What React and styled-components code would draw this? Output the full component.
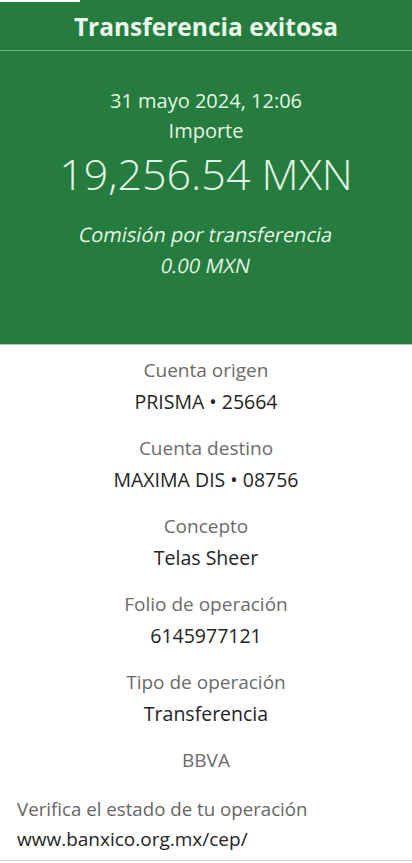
import React from "react";
import styled, { createGlobalStyle } from "styled-components";

const Global = createGlobalStyle`
  html, body { margin: 0; padding: 0; background: #ffffff; }
  body { font-family: "Open Sans", Roboto, sans-serif; -webkit-font-smoothing: antialiased; }
`;

const Page = styled.div`
  width: 412px;
  min-height: 863px;
  display: flex;
  flex-direction: column;
  background: #ffffff;
`;

const Header = styled.section`
  position: relative;
  background: #267c3e;
  color: #e6f6e6;
  display: flex;
  flex-direction: column;
  align-items: center;
  height: 345px;
  box-sizing: border-box;
  border-bottom: 1px solid #a9cfae;
`;

const TopTab = styled.div`
  position: absolute;
  left: 0;
  top: 0;
  width: 80px;
  height: 2px;
  background: #ffffff;
`;

const Title = styled.h1`
  margin: 0;
  width: 100%;
  box-sizing: border-box;
  height: 51px;
  padding-top: 11px;
  text-align: center;
  font-size: 24.5px;
  font-weight: 700;
  line-height: 32px;
  color: #eaf8ea;
  border-bottom: 1px solid #6fae7e;
`;

const Summary = styled.div`
  display: flex;
  flex-direction: column;
  align-items: center;
  padding-top: 35px;
`;

const Line = styled.div`
  font-size: ${(p) => p.$size || 20}px;
  font-weight: ${(p) => p.$weight || 400};
  line-height: ${(p) => p.$lh || 30}px;
  margin-top: ${(p) => p.$mt || 0}px;
  color: #e3f5e3;
  white-space: nowrap;
`;

const Slanted = styled(Line)`
  display: inline-block;
  transform: skewX(-11deg);
`;

const Details = styled.section`
  display: flex;
  flex-direction: column;
  align-items: center;
  padding-top: 10px;
`;

const Field = styled.div`
  display: flex;
  flex-direction: column;
  align-items: center;
  margin-bottom: 16px;
`;

const Label = styled.div`
  font-size: 19px;
  line-height: 31px;
  color: #6b6b6b;
  font-weight: 400;
`;

const Value = styled.div`
  font-size: 19.5px;
  line-height: 31px;
  color: #242424;
`;

const Footer = styled.div`
  padding: 1px 17px 5px;
  display: flex;
  flex-direction: column;
  border-bottom: 1px solid #cfcfcf;
`;

const FootLine = styled.div`
  font-size: ${(p) => (p.$muted ? 18.7 : 19)}px;
  line-height: 31px;
  color: ${(p) => (p.$muted ? "#666666" : "#242424")};
`;

const fields = [
  ["Cuenta origen", "PRISMA • 25664"],
  ["Cuenta destino", "MAXIMA DIS • 08756"],
  ["Concepto", "Telas Sheer"],
  ["Folio de operación", "6145977121"],
  ["Tipo de operación", "Transferencia"],
];

export default function App() {
  return (
    <Page>
      <Global />
      <Header>
        <TopTab />
        <Title>Transferencia exitosa</Title>
        <Summary>
          <Line>31 mayo 2024, 12:06</Line>
          <Line>Importe</Line>
          <Line $size={43} $weight={300} $lh={56}>19,256.54 MXN</Line>
          <Slanted $mt={18}>Comisión por transferencia</Slanted>
          <Slanted $lh={32}>0.00 MXN</Slanted>
        </Summary>
      </Header>
      <Details>
        {fields.map(([l, v]) => (
          <Field key={l}>
            <Label>{l}</Label>
            <Value>{v}</Value>
          </Field>
        ))}
        <Field>
          <Label>BBVA</Label>
        </Field>
      </Details>
      <Footer>
        <FootLine $muted>Verifica el estado de tu operación</FootLine>
        <FootLine>www.banxico.org.mx/cep/</FootLine>
      </Footer>
    </Page>
  );
}
